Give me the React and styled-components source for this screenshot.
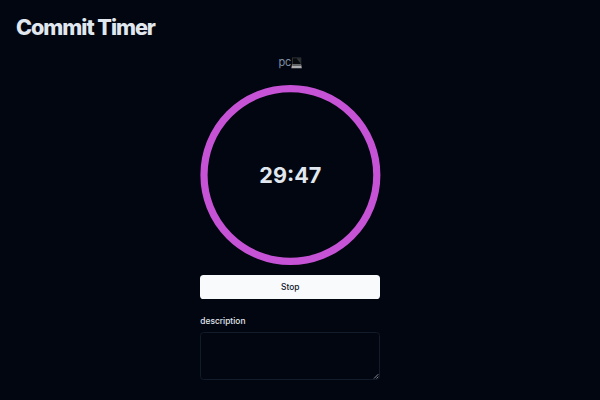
import React from "react";
import styled, { createGlobalStyle } from "styled-components";

const GlobalStyle = createGlobalStyle`
  *, *::before, *::after { box-sizing: border-box; }
  body {
    margin: 0;
    background: #020610;
    color: #e1e7ef;
    font-family: Inter, "Liberation Sans", sans-serif;
    overflow: hidden;
  }
`;

const Page = styled.main`
  height: 400px;
  padding: 15px 19px 0 16px;
  display: flex;
  flex-direction: column;
`;

const Title = styled.h1`
  margin: 0;
  font-size: 21.6px;
  line-height: 24px;
  font-weight: 800;
  letter-spacing: -0.048em;
`;

const Timer = styled.section`
  width: 180px;
  margin: 15px 0 0 184.3px;
  display: flex;
  flex-direction: column;
`;

const TaskName = styled.p`
  margin: 0;
  height: 17px;
  display: flex;
  justify-content: center;
  align-items: center;
  font-size: 11px;
  line-height: 17px;
  letter-spacing: -0.03em;
  color: #7f8ea3;
`;

const Laptop = styled.svg`
  width: 11px;
  height: 12px;
`;

const Dial = styled.div`
  display: grid;
  place-items: center;
  height: 180px;
  margin-top: 14px;
  > * { grid-area: 1 / 1; }
`;

const Ring = styled.svg`
  width: 180px;
  height: 180px;
  overflow: visible;
`;

const Remaining = styled.span`
  font-size: 21.6px;
  line-height: 24px;
  font-weight: 700;
`;

const StopButton = styled.button`
  height: 24px;
  margin-top: 10px;
  padding: 0;
  border: 0;
  border-radius: 3.6px;
  background: #f8fafc;
  color: #0f172a;
  font: 500 8.4px/12px Inter, sans-serif;
`;

const Label = styled.label`
  margin-top: 17px;
  font-size: 8.4px;
  line-height: 10px;
  font-weight: 500;
`;

const Description = styled.textarea`
  height: 48px;
  padding: 5px 7px;
  border: 1px solid #121b2a;
  border-radius: 3.6px;
  background: transparent;
  color: inherit;
  outline: none;
  resize: none;
  grid-area: 1 / 1;
`;

const Field = styled.div`
  display: grid;
  margin-top: 6.4px;
`;

const Grip = styled.svg`
  grid-area: 1 / 1;
  place-self: end;
  width: 7px;
  height: 7px;
  pointer-events: none;
`;

export default function App() {
  return (
    <>
      <GlobalStyle />
      <Page>
        <Title>Commit Timer</Title>
        <Timer>
          <TaskName>
            pc
            <Laptop viewBox="0 0 11 12" aria-label="laptop">
              <path d="M1 .6h9.2v7H1z" fill="#44484b" />
              <path d="M1.6 1.2h8v5.8h-8z" fill="#080b0d" />
              <path d="M5.5 1.2h4.1v5.2z" fill="#303539" />
              <path d="M1 7.5h9.2l.6 3.7H.3z" fill="#aaacad" />
              <path d="M1.5 7.6h8.2l.3 1.3H1.2z" fill="#5f6161" />
            </Laptop>
          </TaskName>
          <Dial>
            <Ring viewBox="0 0 180 180">
              <circle cx="90.4" cy="90" r="86.4" fill="none" stroke="#c653d6" strokeWidth="7.2" />
            </Ring>
            <Remaining>29:47</Remaining>
          </Dial>
          <StopButton>Stop</StopButton>
          <Label htmlFor="description">description</Label>
          <Field>
            <Description id="description" />
            <Grip viewBox="0 0 7 7">
              <path d="M1 5.5 5.3 1.2M3.5 5.5 5.3 3.7" stroke="#a5a8ad" strokeWidth=".8" />
            </Grip>
          </Field>
        </Timer>
      </Page>
    </>
  );
}
